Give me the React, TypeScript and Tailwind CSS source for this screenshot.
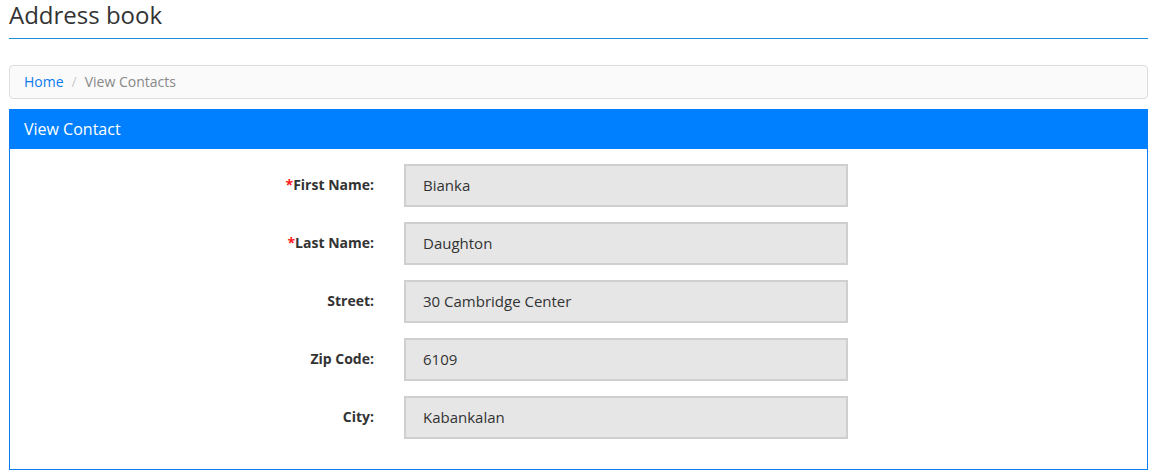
import React from "react";

const rows = [
  { label: "First Name:", value: "Bianka", req: true },
  { label: "Last Name:", value: "Daughton", req: true },
  { label: "Street:", value: "30 Cambridge Center", req: false },
  { label: "Zip Code:", value: "6109", req: false },
  { label: "City:", value: "Kabankalan", req: false },
];

export default function App() {
  return (
    <div className="bg-white min-h-[473px] px-[9px] pt-0" style={{ fontFamily: '"Open Sans", sans-serif' }}>
      <div className="w-[1139px]">
        <h1 className="text-[24px] leading-[28px] font-normal text-[#333] pt-[1px] pb-[9px] border-b border-[#1a8fd8]">
          Address book
        </h1>
        <div className="mt-[26px] h-[34px] border border-[#dddddd] bg-[#fafafa] rounded-[4px] flex items-center pl-[14px] pb-[1px] text-[14px]">
          <span className="text-[#0a7cf0]">Home</span>
          <span className="text-[#cccccc] px-[8px]">/</span>
          <span className="text-[#888888]">View Contacts</span>
        </div>
        <div className="mt-[10px] border-x border-b border-[color:#0a7ff5] text-[#0a7ff5]">
          <div className="h-[40px] bg-[#0080ff] flex items-center pl-[14px] pb-[1px] text-white text-[16px]">
            View Contact
          </div>
          <div className="pt-[15px] pb-[30px] flex flex-col gap-[15px]">
            {rows.map((r) => (
              <div key={r.label} className="flex items-center">
                <div className="w-[364px] text-right text-[14px] font-bold text-[#333] pb-[2px]">
                  {r.req && <span className="text-[#ff1a1a]">*</span>}
                  {r.label}
                </div>
                <div className="ml-[30px] w-[444px] h-[43px] bg-[#e6e6e6] border-2 border-[#cfcfcf] flex items-center pl-[17px] text-[15px] text-[#333]">
                  {r.value}
                </div>
              </div>
            ))}
          </div>
        </div>
      </div>
    </div>
  );
}
